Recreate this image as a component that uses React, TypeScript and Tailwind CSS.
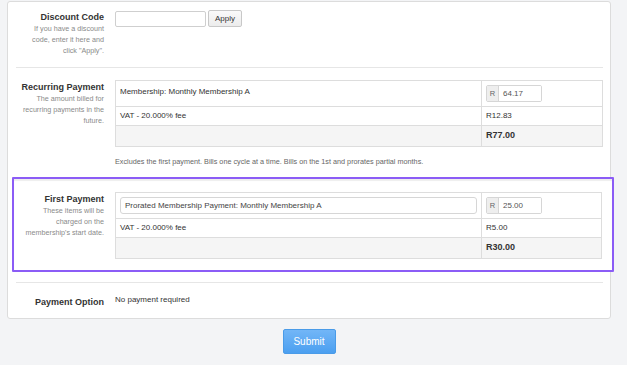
import React from "react";

function Label({ title, lines }: { title: string; lines: string[] }) {
  return (
    <div className="w-[88px] shrink-0 text-right mt-[1px]">
      <div className="text-[9px] leading-[12px] font-bold text-[#333]">{title}</div>
      {lines.map((l, i) => (
        <div key={i} className="text-[7.2px] leading-[11px] text-[#8a8a8a] whitespace-nowrap">
          {l}
        </div>
      ))}
    </div>
  );
}

function AmountInput({ value }: { value: string }) {
  return (
    <div className="flex h-[17px] w-[56px] border border-[#d6d6d6] rounded-[2px] overflow-hidden">
      <div className="w-[12px] bg-[#eeeeee] border-r border-[#d6d6d6] text-[7.5px] text-[#666] flex items-center justify-center">
        R
      </div>
      <div className="flex-1 bg-white text-[8px] text-[#555] flex items-center pl-[4px]">{value}</div>
    </div>
  );
}

function PriceTable({
  first,
  amount,
  vat,
  total,
  inputRow,
}: {
  first: string;
  amount: string;
  vat: string;
  total: string;
  inputRow: boolean;
}) {
  return (
    <div className="flex-1 border border-[#dddddd] text-[8px] text-[#333]">
      <div className="grid grid-cols-[366px_1fr] border-b border-[#dddddd]">
        <div className="border-r border-[#dddddd] px-[4px] py-[4px]">
          {inputRow ? (
            <div className="h-[17px] border border-[#d6d6d6] rounded-[3px] flex items-center pl-[4px] text-[#444]">
              {first}
            </div>
          ) : (
            <div className="leading-[11px] pt-[1px]">{first}</div>
          )}
        </div>
        <div className="px-[4px] py-[4px]">
          <AmountInput value={amount} />
        </div>
      </div>
      <div className="grid grid-cols-[366px_1fr] h-[19px] border-b border-[#dddddd]">
        <div className="border-r border-[#dddddd] px-[4px] flex items-center">VAT - 20.000% fee</div>
        <div className="px-[4px] flex items-center">{vat}</div>
      </div>
      <div className="grid grid-cols-[366px_1fr] h-[20px] bg-[#f5f5f5]">
        <div className="border-r border-[#dddddd]"></div>
        <div className="px-[4px] flex items-center text-[9px] font-bold">{total}</div>
      </div>
    </div>
  );
}

export default function App() {
  return (
    <div className="w-[627px] h-[365px] bg-[#f3f4f6] font-['Liberation_Sans',Arial,Helvetica,sans-serif] text-[#333] overflow-hidden">
      <div className="pt-[1px] pl-[7px] w-[611px]">
        <div className="bg-white border border-[#dcdcdc] rounded-[3px] pl-[8px] pr-[7px]">
          {/* Discount code */}
          <div className="flex gap-[11px] pt-[8px] pb-[11px] border-b border-[#e6e6e6]">
            <Label title="Discount Code" lines={["If you have a discount", "code, enter it here and", 'click "Apply".']} />
            <div className="flex items-start gap-[2px]">
              <div className="w-[91px] h-[16px] mt-[1px] border border-[#cfcfcf] rounded-[2px] bg-white"></div>
              <button className="w-[34px] h-[17px] border border-[#c8c8c8] rounded-[2px] bg-gradient-to-b from-[#fafafa] to-[#ececec] text-[8px] text-[#333] flex items-center justify-center">
                Apply
              </button>
            </div>
          </div>

          {/* Recurring */}
          <div className="pt-[12px] pb-[10px]">
            <div className="flex gap-[11px]">
              <Label
                title="Recurring Payment"
                lines={["The amount billed for", "recurring payments in the", "future."]}
              />
              <PriceTable first="Membership: Monthly Membership A" amount="64.17" vat="R12.83" total="R77.00" inputRow={false} />
            </div>
            <div className="ml-[99px] mt-[10px] text-[7.25px] leading-[10px] text-[#666] whitespace-nowrap">
              Excludes the first payment. Bills one cycle at a time. Bills on the 1st and prorates partial months.
            </div>
          </div>

          {/* First payment (highlighted) */}
          <div className="relative bg-white ml-[-4px] mr-[-11px] border-2 border-[#8b5cf6] rounded-[1px] pl-[2px] pr-[10px] pt-[13px] pb-[11px] shadow-[inset_0_2px_1px_#eeeeee]">
            <div className="flex gap-[11px]">
              <Label
                title="First Payment"
                lines={["These items will be", "charged on the", "membership's start date."]}
              />
              <PriceTable
                first="Prorated Membership Payment: Monthly Membership A"
                amount="25.00"
                vat="R5.00"
                total="R30.00"
                inputRow={true}
              />
            </div>
          </div>

          <div className="mt-[10px] border-t border-[#e6e6e6]"></div>

          {/* Payment option */}
          <div className="flex gap-[11px] pt-[11px] pb-[10px]">
            <div className="w-[88px] shrink-0 text-right pt-[2px] text-[9px] leading-[12px] font-bold text-[#333]">
              Payment Option
            </div>
            <div className="text-[8px] leading-[11px] text-[#333]">No payment required</div>
          </div>
        </div>

        <div className="flex justify-center pt-[10px]">
          <button className="w-[53px] h-[25px] rounded-[2px] border border-[#4a9be8] bg-gradient-to-b from-[#72b6f7] to-[#4b9ff0] text-white text-[10px]">
            Submit
          </button>
        </div>
      </div>
    </div>
  );
}
